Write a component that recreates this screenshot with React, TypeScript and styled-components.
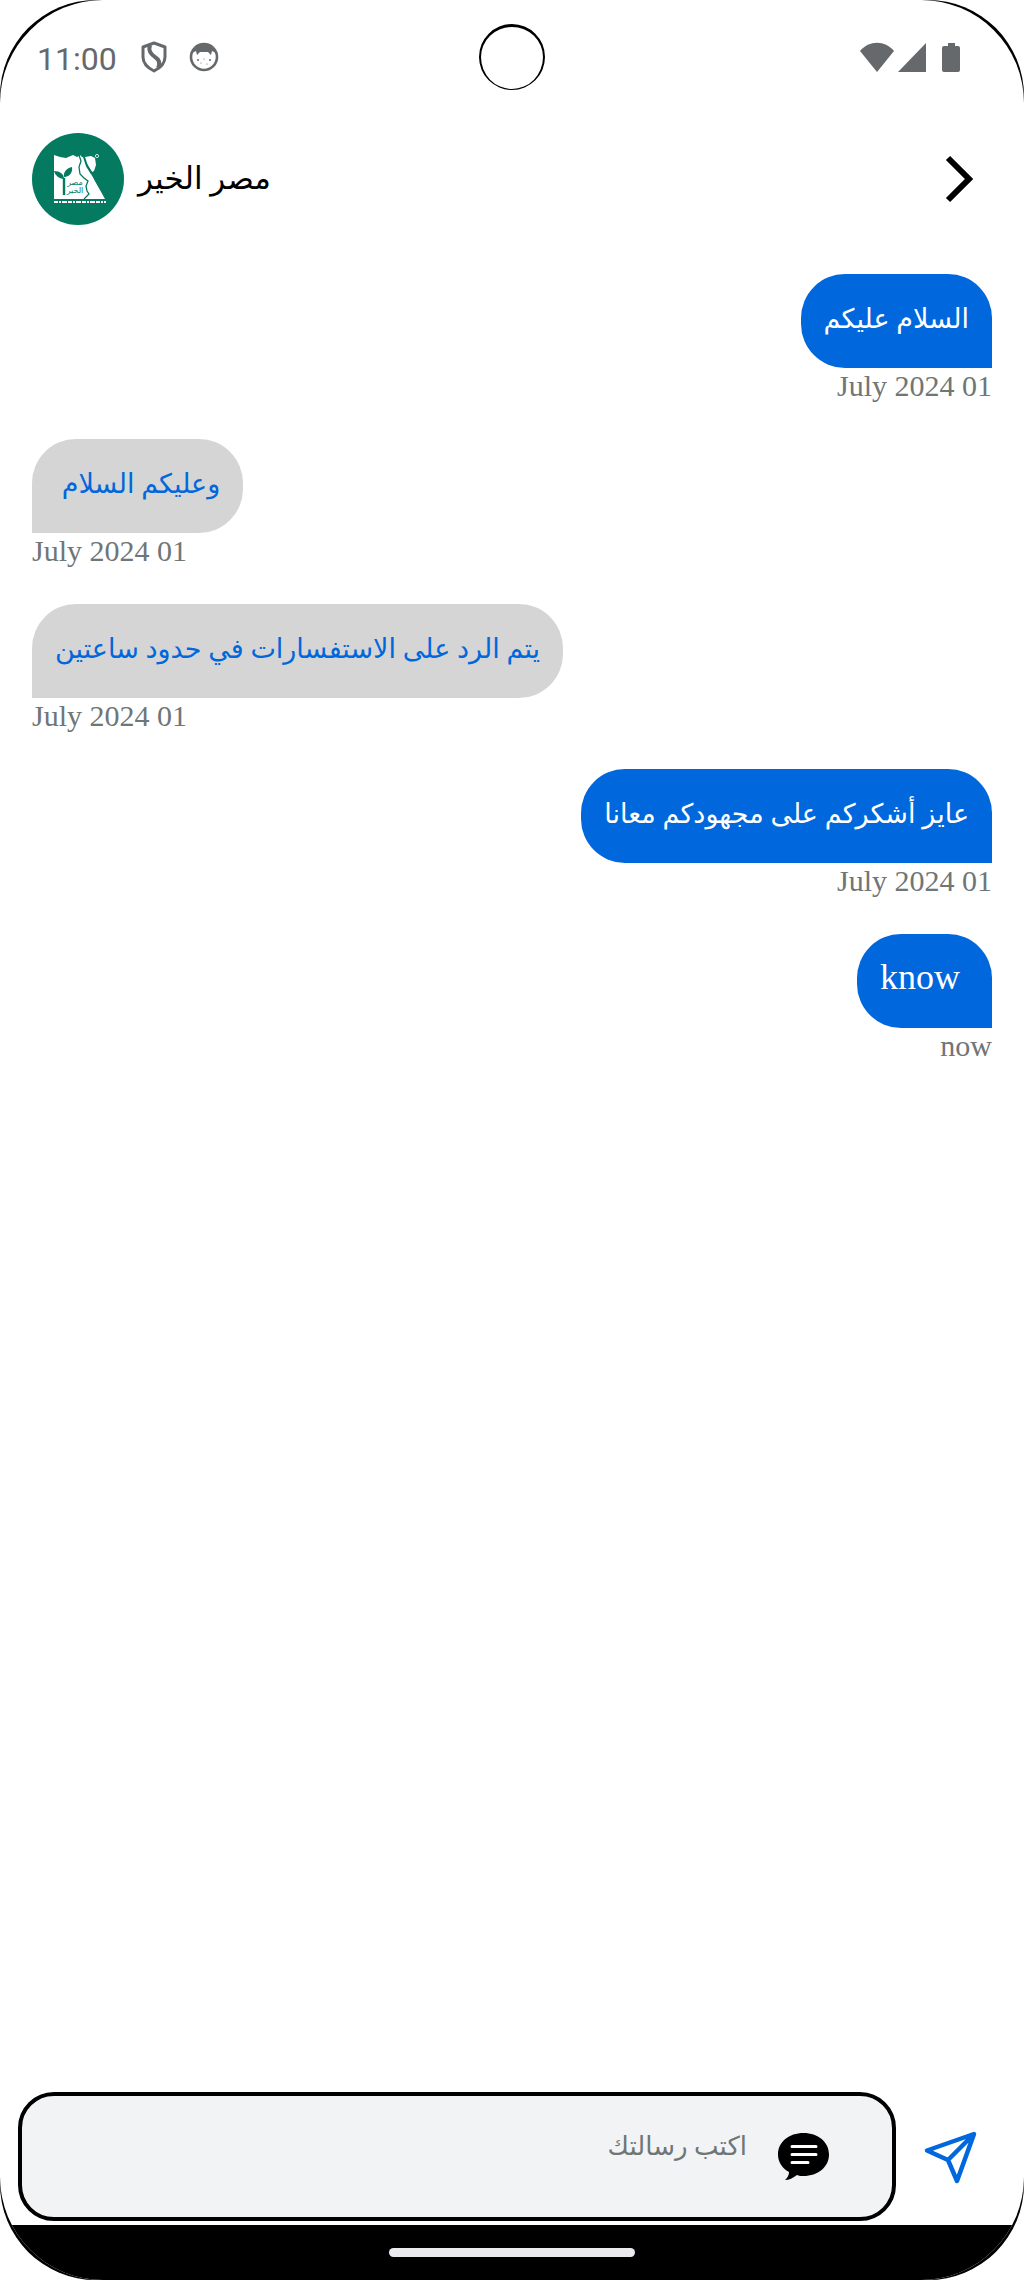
import React from "react";
import styled, { createGlobalStyle } from "styled-components";

const BLUE = "#0067dd";
const STATUS = "#66696b";
const MUTED = "#6f7677";
const SERIF = '"Liberation Serif", "DejaVu Sans", serif';

const GlobalStyle = createGlobalStyle`
  *, *::before, *::after { box-sizing: border-box; }
  body { margin: 0; background: #fff; font-family: ${SERIF}; }
  button, input { font: inherit; border: 0; background: none; padding: 0; }
  svg { display: block; flex: none; }
`;

const Device = styled.div`
  min-height: 100vh;
  display: flex;
  background: #000;
  border-radius: 96px;
  overflow: hidden;
`;

const Screen = styled.div`
  flex: 1;
  min-width: 0;
  display: flex;
  flex-direction: column;
  background: #fff;
  border-radius: 103px;
  overflow: hidden;
`;

const StatusBar = styled.div`
  display: grid;
  grid-template-columns: 1fr auto 1fr;
  align-items: center;
  height: 114px;
  padding: 0 63px 0 37px;
  color: ${STATUS};
`;

const StatusGroup = styled.div<{ $end?: boolean }>`
  display: flex;
  align-items: center;
  justify-content: ${(p) => (p.$end ? "flex-end" : "flex-start")};
`;

const Clock = styled.time`
  font: 400 32px/36px Roboto, sans-serif;
  margin-right: 24px;
  padding-top: 4px;
`;

const StatusIcons = styled.div<{ $gap: number }>`
  display: flex;
  align-items: center;
  gap: ${(p) => p.$gap}px;
`;

const Camera = styled.div`
  width: 66px;
  height: 66px;
  border: solid #000;
  border-width: 3px 2px 1px;
  border-radius: 50%;
  margin-left: 26px;
`;

const Header = styled.header`
  display: flex;
  align-items: center;
  gap: 14px;
  padding: 19px 46px 0 32px;
`;

const Avatar = styled.svg`
  width: 92px;
  height: 92px;
`;

const Title = styled.h1`
  flex: 1;
  margin: 0;
  font-size: 31px;
  line-height: 48px;
  font-weight: 400;
  color: #000;
`;

const IconButton = styled.button`
  display: flex;
  cursor: pointer;
`;

const Messages = styled.ol`
  flex: 1;
  display: flex;
  flex-direction: column;
  gap: 35px;
  list-style: none;
  margin: 0;
  padding: 49px 32px 32px;
`;

const Message = styled.li<{ $mine: boolean }>`
  display: flex;
  flex-direction: column;
  align-items: ${(p) => (p.$mine ? "flex-end" : "flex-start")};
`;

const Bubble = styled.p<{ $mine: boolean; $latin?: boolean }>`
  margin: 0;
  padding: ${(p) => (p.$latin ? "18px 23px 26px" : "20px 23px 24px")};
  font-size: ${(p) => (p.$latin ? 36 : 27)}px;
  line-height: 50px;
  white-space: pre-wrap;
  color: ${(p) => (p.$mine ? "#fff" : BLUE)};
  background: ${(p) => (p.$mine ? BLUE : "#d5d5d5")};
  border-radius: ${(p) => (p.$mine ? "44px 44px 0 44px" : "44px 44px 44px 0")};
`;

const Stamp = styled.time`
  font-size: 30px;
  line-height: 36px;
  color: ${MUTED};
`;

const Composer = styled.form`
  display: flex;
  align-items: center;
  padding: 0 46px 4px 18px;
  gap: 28px;
`;

const Field = styled.label`
  flex: 1;
  min-width: 0;
  display: flex;
  align-items: center;
  gap: 31px;
  height: 129px;
  padding: 0 63px 0 24px;
  border: 4px solid #000;
  border-radius: 36px;
  background: #f2f3f5;
`;

const TextInput = styled.input`
  flex: 1;
  min-width: 0;
  height: 100%;
  padding-bottom: 20px;
  font-size: 26px;
  color: #000;
  outline: 0;
  &::placeholder { color: ${MUTED}; opacity: 1; }
`;

const NavBar = styled.div`
  display: flex;
  justify-content: center;
  height: 55px;
  padding-top: 23px;
  background: #000;
`;

const HomePill = styled.div`
  width: 24%;
  height: 9px;
  border-radius: 5px;
  background: #ebebef;
`;

const messages = [
  { text: "السلام عليكم", mine: true, time: "July 2024 01" },
  { text: "وعليكم السلام ", mine: false, time: "July 2024 01" },
  { text: "يتم الرد على الاستفسارات في حدود ساعتين", mine: false, time: "July 2024 01" },
  { text: "عايز أشكركم على مجهودكم معانا", mine: true, time: "July 2024 01" },
  { text: "know ", mine: true, latin: true, time: "now" },
];

function ShieldIcon() {
  return (
    <svg width="26" height="32" viewBox="0 0 26 32" fill="none" stroke="currentColor" strokeWidth="3" strokeLinejoin="round">
      <path d="M13 2 L24 6 V16 C24 22 19 27 13 30 C7 27 2 22 2 16 V6 Z" />
      <path d="M9 4 C7 10 10 13 14 16 C19 19 19 23 17 27" strokeWidth="4" />
    </svg>
  );
}

function FaceIcon() {
  return (
    <svg width="30" height="30" viewBox="0 0 30 30" fill="none">
      <circle cx="15" cy="15" r="13" stroke="currentColor" strokeWidth="2.6" />
      <path d="M3 11 C5 5 10 2 15 2 C20 2 25 5 27 11 L23 9 L22 13 L19 10 H11 L8 13 L7 9 Z" fill="currentColor" />
      <g fill="currentColor">
        <circle cx="9" cy="18" r="1" /><circle cx="21" cy="18" r="1" />
        <circle cx="12" cy="21" r="0.6" /><circle cx="18" cy="22" r="0.6" />
        <circle cx="15" cy="17" r="0.6" />
      </g>
    </svg>
  );
}

function SignalIcons() {
  return (
    <svg width="101" height="32" viewBox="0 0 101 32" fill="currentColor">
      <path d="M0 10 C9 -1 25 -1 34 10 L17 31 Z" />
      <path d="M66 2 V31 H38 Z" />
      <path d="M88 2 H95 V5 H98 Q100 5 100 7 V29 Q100 31 98 31 H84 Q82 31 82 29 V7 Q82 5 84 5 H88 Z" />
    </svg>
  );
}

function Logo() {
  return (
    <Avatar viewBox="0 0 92 92" role="img" aria-label="مصر الخير">
      <circle cx="46" cy="46" r="46" fill="#047a60" />
      <path
        d="M22 22 L28 24 L34 25 L41 22 L45 24 L49 22 L53 24 L59 23 L63 25 L64 32 L62 38 L60 39 L57 34 L54 29 L58 39 L64 50 L68 57 L73 66 H22 Z"
        fill="#fff"
      />
      <path d="M49 22 L52 24 L55 33 L60 41" fill="none" stroke="#047a60" strokeWidth="2" />
      <path d="M47 22 L49 28 L47 34 L48 41 L52 45 L56 48 L54 53 L55 58 L57 61 L52 66" fill="none" stroke="#047a60" strokeWidth="1.3" />
      <path d="M32 62 V45" stroke="#047a60" strokeWidth="2.4" />
      <path d="M32 46 C27 46 23 42 22 38 C28 38 32 41 32 46 Z M32 44 C31 39 35 35 40 34 C41 40 37 44 32 44 Z" fill="#047a60" />
      <circle cx="65" cy="23" r="1.6" fill="none" stroke="#fff" strokeWidth="0.8" />
      <path d="M22 69 H74" stroke="#fff" strokeWidth="2.2" strokeDasharray="4 1 2 1 5 1" />
      <g fill="#047a60" fontFamily="DejaVu Sans" fontSize="8" textAnchor="middle">
        <text x="43" y="52">مصر</text>
        <text x="43" y="60">الخير</text>
      </g>
    </Avatar>
  );
}

export default function App() {
  return (
    <>
      <GlobalStyle />
      <Device>
        <Screen>
          <StatusBar>
            <StatusGroup>
              <Clock>11:00</Clock>
              <StatusIcons $gap={22}>
                <ShieldIcon />
                <FaceIcon />
              </StatusIcons>
            </StatusGroup>
            <Camera />
            <StatusGroup $end>
              <SignalIcons />
            </StatusGroup>
          </StatusBar>

          <Header>
            <Logo />
            <Title>
              <bdi>مصر الخير</bdi>
            </Title>
            <IconButton type="button" aria-label="رجوع">
              <svg width="36" height="48" viewBox="0 0 36 48" fill="none" stroke="#000" strokeWidth="6">
                <path d="M6 3 L27 24 L6 45" />
              </svg>
            </IconButton>
          </Header>

          <Messages>
            {messages.map((m, i) => (
              <Message key={i} $mine={m.mine}>
                <Bubble $mine={m.mine} $latin={m.latin} dir={m.latin ? "ltr" : "rtl"}>{m.text}</Bubble>
                <Stamp>{m.time}</Stamp>
              </Message>
            ))}
          </Messages>

          <Composer onSubmit={(e) => e.preventDefault()}>
            <Field>
              <TextInput type="text" dir="rtl" placeholder="اكتب رسالتك" aria-label="اكتب رسالتك" />
              <svg width="51" height="48" viewBox="0 0 51 48">
                <path d="M25.500 0 C40 0 51 9 51 21.500 C51 34 40 43 25.500 43 C23 43 21 43 19 42 C15 45 11 47 7 47 C10 44 11 42 11 39 C4 35 0 29 0 21.500 C0 9 11 0 25.500 0 Z" fill="#000" />
                <path d="M14 13.500 H38 M14 21.500 H38 M14 29.500 H30" stroke="#fff" strokeWidth="3" strokeLinecap="round" />
              </svg>
            </Field>
            <IconButton type="submit" aria-label="إرسال">
              <svg width="54" height="54" viewBox="0 0 54 54" fill="none" stroke={BLUE} strokeWidth="4.500" strokeLinejoin="round">
                <path d="M50 4 L3 20.500 L24 30 L33 51 Z M50 4 L24 30" />
              </svg>
            </IconButton>
          </Composer>

          <NavBar>
            <HomePill />
          </NavBar>
        </Screen>
      </Device>
    </>
  );
}
